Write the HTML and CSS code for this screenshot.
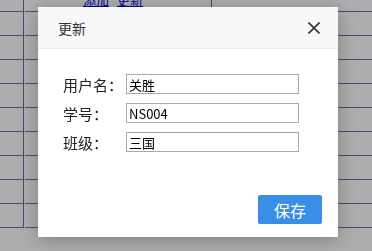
FILE: index.html
```html
<!DOCTYPE html>
<html lang="zh-CN">
<head>
<meta charset="utf-8">
<title>更新</title>
<link rel="stylesheet" href="styles.css">
</head>
<body>
<div class="page">
  <div class="grid">
    <div class="cell c1 head"></div>
    <div class="cell c2 head"><a href="#">添加</a> <a href="#">更新</a></div>
    <div class="cell c3 head"></div>
    <div class="cell c1"></div><div class="cell c2"></div><div class="cell c3"></div>
    <div class="cell c1"></div><div class="cell c2"></div><div class="cell c3"></div>
    <div class="cell c1"></div><div class="cell c2"></div><div class="cell c3"></div>
    <div class="cell c1"></div><div class="cell c2"></div><div class="cell c3"></div>
    <div class="cell c1"></div><div class="cell c2"></div><div class="cell c3"></div>
    <div class="cell c1"></div><div class="cell c2"></div><div class="cell c3"></div>
    <div class="cell c1"></div><div class="cell c2"></div><div class="cell c3"></div>
    <div class="cell c1"></div><div class="cell c2"></div><div class="cell c3"></div>
    <div class="cell c1"></div><div class="cell c2"></div><div class="cell c3"></div>
  </div>
</div>
<div class="overlay"></div>
<div class="dialog">
  <div class="dialog-header">
    <span class="dialog-title">更新</span>
    <svg class="close" width="12" height="12" viewBox="0 0 12 12"><path d="M0.5 0.5L11.5 11.5M11.5 0.5L0.5 11.5" stroke="#333" stroke-width="1.6" fill="none"/></svg>
  </div>
  <div class="dialog-body">
    <div class="row"><span class="label">用户名：</span><input class="field" type="text" value="关胜"></div>
    <div class="row"><span class="label">学号：</span><input class="field" type="text" value="NS004"></div>
    <div class="row"><span class="label">班级：</span><input class="field" type="text" value="三国"></div>
  </div>
  <div class="dialog-footer">
    <button class="btn">保存</button>
  </div>
</div>
</body>
</html>
```
FILE: styles.css
```css
html, body {
  margin: 0;
  padding: 0;
  background: #fff;
  overflow: hidden;
  font-family: "Noto Sans CJK SC", "Noto Sans", sans-serif;
}
.page {
  width: 372px;
  height: 251px;
}
.grid {
  display: grid;
  grid-template-columns: 24px 187px 1fr;
  grid-auto-rows: 24px;
  grid-template-rows: 12px;
  column-gap: 1px;
}
.cell {
  border-bottom: 1px solid #6c6cab;
  box-sizing: border-box;
}
.c1 { border-right: 1px solid #6c6cab; }
.c2 { border-right: 1px solid #6c6cab; }
.head {
  font-size: 13px;
  line-height: 10px;
  overflow: hidden;
}
.c2.head { padding-left: 58px; }
.head a {
  color: #0000ee;
  position: relative;
  top: -5px;
  margin-right: 5px;
}
.overlay {
  position: fixed;
  inset: 0;
  background: rgba(0, 0, 0, 0.32);
}
.dialog {
  position: fixed;
  left: 38px;
  top: 7px;
  width: 300px;
  height: 230px;
  background: #fff;
  display: flex;
  flex-direction: column;
  box-shadow: 0 3px 18px rgba(0, 0, 0, 0.28);
}
.dialog-header {
  height: 42px;
  box-sizing: border-box;
  background: #f8f8f8;
  border-bottom: 1px solid #ebebeb;
  display: flex;
  align-items: center;
  justify-content: space-between;
  padding: 0 18px 0 20px;
}
.dialog-title {
  font-size: 14px;
  color: #333;
}
.close { display: block; }
.dialog-body {
  padding: 25px 0 0 25px;
  display: flex;
  flex-direction: column;
  gap: 9px;
}
.row {
  display: flex;
  align-items: center;
  height: 20px;
}
.label {
  width: 63px;
  font-size: 15px;
  color: #222;
  white-space: nowrap;
}
.field {
  width: 173px;
  height: 20px;
  box-sizing: border-box;
  border: 1px solid #a9a9a9;
  margin: 0;
  padding: 0 2px;
  font-family: "Noto Sans CJK SC", "Noto Sans", sans-serif;
  font-size: 13px;
  color: #000;
  outline: none;
}
.dialog-footer {
  margin-top: auto;
  display: flex;
  justify-content: flex-end;
  padding: 0 16px 13px 0;
}
.btn {
  width: 64px;
  height: 29px;
  border: none;
  border-radius: 2px;
  background: #3a8ee6;
  color: #fff;
  font-family: "Noto Sans CJK SC", "Noto Sans", sans-serif;
  font-size: 16px;
  padding: 0;
}
```
